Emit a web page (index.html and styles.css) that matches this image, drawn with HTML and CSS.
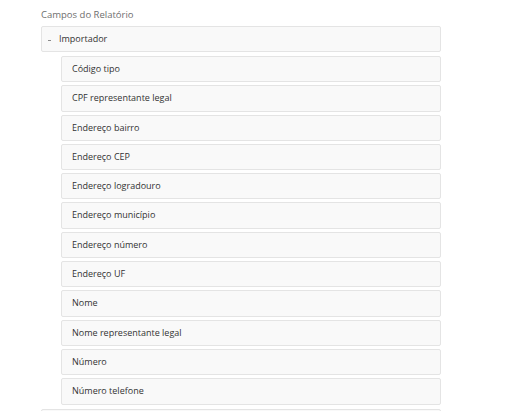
FILE: index.html
```html
<!DOCTYPE html>
<html lang="pt-BR">
<head>
<meta charset="utf-8">
<title>Campos do Relatório</title>
<link rel="stylesheet" href="styles.css">
</head>
<body>
<div class="panel">
  <div class="title">Campos do Relatório</div>
  <ul class="tree">
    <li class="group">
      <div class="node parent"><span class="toggle"></span>Importador</div>
      <ul class="children">
        <li class="node">Código tipo</li>
        <li class="node">CPF representante legal</li>
        <li class="node">Endereço bairro</li>
        <li class="node">Endereço CEP</li>
        <li class="node">Endereço logradouro</li>
        <li class="node">Endereço município</li>
        <li class="node">Endereço número</li>
        <li class="node">Endereço UF</li>
        <li class="node">Nome</li>
        <li class="node">Nome representante legal</li>
        <li class="node">Número</li>
        <li class="node">Número telefone</li>
      </ul>
    </li>
    <li class="group">
      <div class="node parent"></div>
    </li>
  </ul>
</div>
</body>
</html>
```
FILE: styles.css
```css
html, body {
  margin: 0;
  padding: 0;
  background: #ffffff;
}
body {
  font-family: "Open Sans", "Liberation Sans", sans-serif;
  font-size: 9px;
  color: #333333;
}
.panel {
  padding: 6px 0 0 41px;
  width: 400px;
}
.title {
  color: #6e6e6e;
  font-size: 9.5px;
  line-height: 17px;
  margin-bottom: 3px;
}
.tree, .children {
  list-style: none;
  margin: 0;
  padding: 0;
}
.group {
  margin-bottom: 4px;
}
.node {
  display: flex;
  align-items: center;
  box-sizing: border-box;
  min-height: 26px;
  background: #f9f9f9;
  border: 1px solid #e4e4e4;
  border-radius: 2px;
  padding: 3px 10px;
  line-height: 18.3px;
  margin-bottom: 3px;
}
.parent {
  padding-left: 6px;
  line-height: 18px;
  margin-bottom: 4px;
}
.toggle {
  display: inline-block;
  width: 3px;
  height: 1px;
  background: #8a8a8a;
  margin: 2px 8px 0 0;
}
.children {
  margin-left: 20px;
}
.children .node:last-child {
  margin-bottom: 0;
}
```
